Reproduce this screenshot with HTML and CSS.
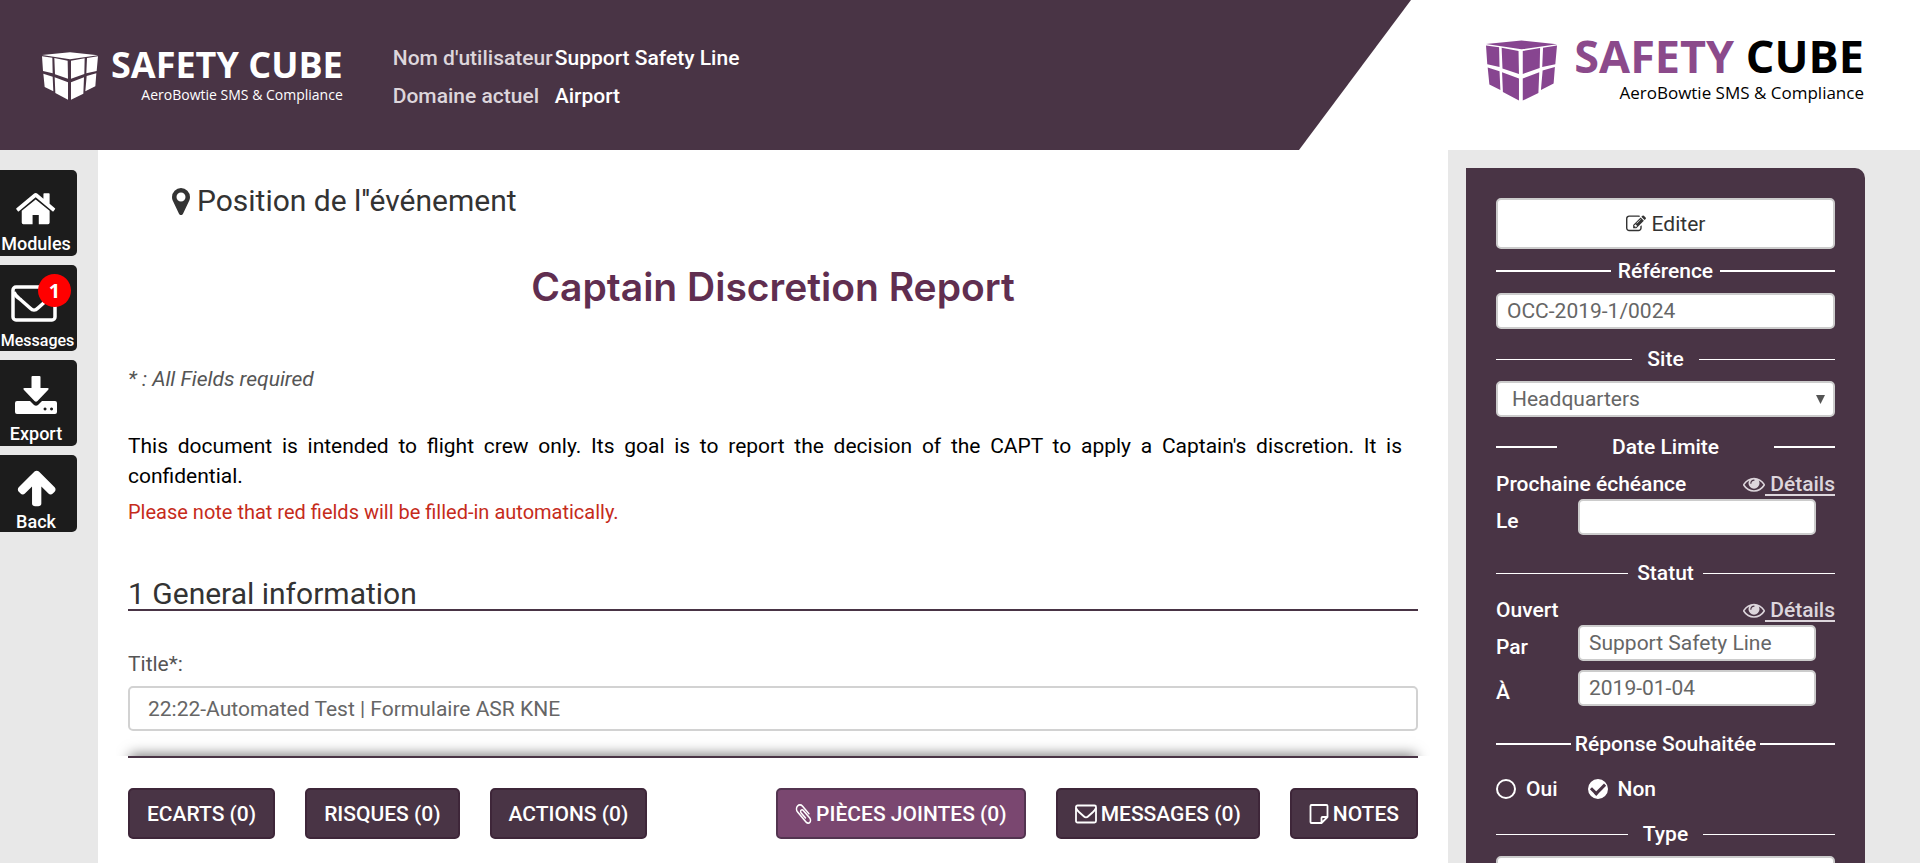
FILE: index.html
```html
<!DOCTYPE html>
<html lang="fr">
<head>
<meta charset="utf-8">
<meta name="viewport" content="width=device-width, initial-scale=1">
<title>Safety Cube</title>
<link rel="stylesheet" href="styles.css">
</head>
<body>
<svg class="defs" aria-hidden="true">
  <symbol id="cube" viewBox="126 155 168 144">
    <path d="M126 164L210 156L294 165L210 177ZM126 168L157 172L158 219L129 212ZM163 173L203 181L204 235L165 222ZM213 181L254 174L253 221L213 235ZM261 173L294 168L290 212L259 219ZM130 220L158 229L160 273L134 260ZM164 231L204 246L204 298L166 278ZM213 246L252 231L250 280L213 298ZM260 227L289 219L286 258L256 273Z"/>
  </symbol>
  <symbol id="eye" viewBox="0 0 1792 1792">
    <path d="M1664 960q-152-236-381-353 61 104 61 225 0 185-131.500 316.500t-316.500 131.500-316.500-131.500-131.500-316.500q0-121 61-225-229 117-381 353 133 205 333.500 326.500t434.500 121.500 434.500-121.500 333.500-326.500zm-720-384q0-20-14-34t-34-14q-125 0-214.500 89.500t-89.500 214.500q0 20 14 34t34 14 34-14 14-34q0-86 61-147t147-61q20 0 34-14t14-34zm848 384q0 34-20 69-140 230-376.500 368.500t-499.500 138.500-499.500-139-376.500-368q-20-35-20-69t20-69q140-229 376.500-368t499.500-139 499.500 139 376.500 368q20 35 20 69z"/>
  </symbol>
</svg>

<header class="header">
  <div class="header-bar">
    <div class="logo logo-light">
      <svg class="logo-cube"><use href="#cube"/></svg>
      <div class="logo-text">
        <span class="logo-name">SAFETY CUBE</span>
        <span class="logo-tag">AeroBowtie SMS &amp; Compliance</span>
      </div>
    </div>
    <dl class="user-info">
      <dt>Nom d'utilisateur</dt><dd>Support Safety Line</dd>
      <dt>Domaine actuel</dt><dd>Airport</dd>
    </dl>
  </div>
  <div class="logo logo-color">
    <svg class="logo-cube"><use href="#cube"/></svg>
    <div class="logo-text">
      <span class="logo-name"><span class="logo-accent">SAFETY</span> CUBE</span>
      <span class="logo-tag">AeroBowtie SMS &amp; Compliance</span>
    </div>
  </div>
</header>

<div class="layout">
  <nav class="rail">
    <a class="rail-item" href="#modules">
      <svg class="rail-icon" viewBox="0 0 42 42"><path transform="translate(-1 2) scale(.0242)" d="M1472 992v480q0 26-19 45t-45 19h-384v-384h-256v384h-384q-26 0-45-19t-19-45v-480q0-1 .5-3t.5-3l575-474 575 474q1 2 1 6zm223-69l-62 74q-8 9-21 11h-3q-13 0-21-7l-692-577-692 577q-12 8-24 7-13-2-21-11l-62-74q-8-10-7-23.500t11-21.500l719-599q32-26 76-26t76 26l244 204v-195q0-14 9-23t23-9h192q14 0 23 9t9 23v408l219 182q10 8 11 21.500t-7 23.500z"/></svg>
      <span>Modules</span>
    </a>
    <a class="rail-item rail-messages" href="#messages">
      <svg class="rail-icon rail-icon-wide" viewBox="0 0 46 42"><g fill="none" stroke="#fff" stroke-width="3.500"><rect x="2" y="5" width="42" height="33" rx="3"/><path d="M3 10c1 4 3 5 7 8l9 8c3 3 5 3 8 0l9-8c4-3 6-4 7-8"/></g></svg>
      <span>Messages</span>
      <span class="badge">1</span>
    </a>
    <a class="rail-item" href="#export">
      <svg class="rail-icon" viewBox="0 0 42 42"><path fill-rule="evenodd" d="M16.500 2q0-1 1-1h7q1 0 1 1v11h7q2 0 .5 2L22.500 26q-1.500 1.500-3 0L9 15q-1.500-2 .5-2h7ZM2 26h13l4 4q2 1.500 4 0l4-4h13q2 0 2 2v9q0 2-2 2H2q-2 0-2-2v-9q0-2 2-2ZM30 32.500a1.500 1.500 0 1 0 .1 0ZM36.500 32.500a1.500 1.500 0 1 0 .1 0Z"/></svg>
      <span>Export</span>
    </a>
    <a class="rail-item rail-back" href="#back">
      <svg class="rail-icon" viewBox="0 0 42 42"><path transform="translate(0 -1) scale(.0242)" d="M1675 971q0 51-37 90l-75 75q-38 38-91 38-54 0-90-38l-294-293v704q0 52-37.500 84.500t-90.500 32.500h-128q-53 0-90.500-32.500t-37.500-84.500v-704l-294 293q-36 38-90 38t-90-38l-75-75q-38-38-38-90 0-53 38-91l651-651q35-37 90-37 54 0 91 37l651 651q37 39 37 91z"/></svg>
      <span>Back</span>
    </a>
  </nav>

  <main class="main">
    <div class="report">
      <h3 class="position"><svg class="pin" viewBox="384 128 1024 1536"><path d="M1152 640q0-106-75-181t-181-75-181 75-75 181 75 181 181 75 181-75 75-181zm256 0q0 109-33 179l-364 774q-16 33-47.500 52t-67.500 19-67.500-19-46.500-52l-365-774q-33-70-33-179 0-212 150-362t362-150 362 150 150 362z"/></svg>Position de l''événement</h3>
      <h1 class="title">Captain Discretion Report</h1>
      <p class="required">* : All Fields required</p>
      <p class="intro">This document is intended to flight crew only. Its goal is to report the decision of the CAPT to apply a Captain's discretion. It is confidential.</p>
      <p class="warning">Please note that red fields will be filled-in automatically.</p>
      <h2 class="section">1 General information</h2>
      <label class="field-label" for="title">Title*:</label>
      <input class="field" id="title" type="text" value="22:22-Automated Test | Formulaire ASR KNE">
    </div>
    <footer class="actions">
      <button class="btn" type="button">ECARTS (0)</button>
      <button class="btn" type="button">RISQUES (0)</button>
      <button class="btn" type="button">ACTIONS (0)</button>
      <button class="btn btn-active" type="button"><svg class="btn-icon btn-icon-narrow" viewBox="128 128 1536 1536" preserveAspectRatio="none"><path d="M1596 1385q0 117-79 196t-196 79q-135 0-235-100l-777-776q-113-115-113-271 0-159 110-270t269-111q158 0 273 113l605 606q10 10 10 22 0 16-30.500 46.500t-46.500 30.500q-13 0-23-10l-606-607q-79-77-181-77-106 0-179 75t-73 181q0 105 76 181l776 777q63 63 145 63 64 0 106-42t42-106q0-82-63-145l-581-581q-26-24-60-24-29 0-48 19t-19 48q0 32 25 59l410 410q10 10 10 22 0 16-31 47t-47 31q-12 0-22-10l-410-410q-63-61-63-149 0-82 57-139t139-57q88 0 149 63l581 581q100 98 100 235z"/></svg>PIÈCES JOINTES (0)</button>
      <button class="btn" type="button"><svg class="btn-icon btn-icon-wide" viewBox="0 0 22 20"><g fill="none" stroke="#fff" stroke-width="1.800"><rect x="1" y="1.500" width="20" height="17" rx="1.500"/><path d="M1 4c1 2 2 3 3 4l5 4.500c1 1 3 1 4 0l5-4.500c1-1 2-2 3-4"/></g></svg>MESSAGES (0)</button>
      <button class="btn" type="button"><svg class="btn-icon btn-icon-note" viewBox="0 0 20 20"><path fill="none" stroke="#fff" stroke-width="1.800" stroke-linejoin="round" d="M12.500 19H2.500q-1 0-1-1V2q0-1 1-1h15q1 0 1 1v11ZM12.500 19V14q0-1 1-1h5"/></svg>NOTES</button>
    </footer>
  </main>

  <aside class="side">
    <form class="panel">
      <button class="edit" type="button"><svg class="btn-icon" viewBox="0 0 1792 1792"><path d="M888 1184l116-116-152-152-116 116v56h96v96h56zm440-720q-16-16-33 1l-350 350q-17 17-1 33t33-1l350-350q17-17 1-33zm80 594v190q0 119-84.500 203.500t-203.500 84.500h-832q-119 0-203.500-84.500t-84.500-203.500v-832q0-119 84.500-203.500t203.500-84.500h832q63 0 117 25 15 7 18 23 3 17-9 29l-49 49q-14 14-32 8-23-6-45-6h-832q-66 0-113 47t-47 113v832q0 66 47 113t113 47h832q66 0 113-47t47-113v-126q0-13 9-22l64-64q15-15 35-7t20 29zm-96-738l288 288-672 672h-288v-288zm444 132l-92 92-288-288 92-92q28-28 68-28t68 28l152 152q28 28 28 68t-28 68z"/></svg>Editer</button>

      <label class="rule rule-34 rule-thick" for="ref">Référence</label>
      <input class="panel-field" id="ref" type="text" value="OCC-2019-1/0024">

      <label class="rule rule-40 rule-gap" for="site">Site</label>
      <div class="select"><select class="panel-field" id="site"><option>Headquarters</option></select></div>

      <div class="rule rule-18 rule-thick rule-gap">Date Limite</div>
      <div class="row"><span>Prochaine échéance</span><a class="details" href="#echeance"><svg class="eye"><use href="#eye"/></svg><span>&nbsp;Détails</span></a></div>
      <div class="pair"><label for="le">Le</label><input class="panel-field" id="le" type="text"></div>

      <div class="rule rule-39 rule-far">Statut</div>
      <div class="row"><span>Ouvert</span><a class="details" href="#statut"><svg class="eye"><use href="#eye"/></svg><span>&nbsp;Détails</span></a></div>
      <div class="pair"><label for="par">Par</label><input class="panel-field" id="par" type="text" value="Support Safety Line"></div>
      <div class="pair pair-next"><label for="date">À</label><input class="panel-field" id="date" type="text" value="2019-01-04"></div>

      <div class="rule rule-22 rule-thick rule-far">Réponse Souhaitée</div>
      <div class="radios">
        <label><input type="radio" name="reponse">Oui</label>
        <label><input type="radio" name="reponse" checked>Non</label>
      </div>

      <label class="rule rule-39" for="type">Type</label>
      <div class="select"><select class="panel-field" id="type"><option></option></select></div>
    </form>
  </aside>
</div>
</body>
</html>
```
FILE: styles.css
```css
* { box-sizing: border-box; }

body {
  margin: 0;
  height: 100vh;
  display: flex;
  flex-direction: column;
  overflow: hidden;
  background: #fff;
  color: #333;
  font: 400 21px/30px Roboto, "Liberation Sans", sans-serif;
}

h1, h2, h3, p, dl, dd { margin: 0; }
input, select, button { font: inherit; color: inherit; }
svg { fill: currentColor; }
.defs { position: absolute; width: 0; height: 0; }

/* Header */
.header {
  flex: none;
  display: flex;
  justify-content: space-between;
  height: 150px;
}
.header-bar {
  flex: 0 0 1411px;
  display: flex;
  align-items: flex-start;
  gap: 50px;
  padding: 42px 0 0 42px;
  background: #493445;
  clip-path: polygon(0 0, 100% 0, calc(100% - 112px) 100%, 0 100%);
}
.logo { display: flex; font-family: "Open Sans", "Noto Sans", sans-serif; }
.logo-text { display: flex; flex-direction: column; align-items: flex-end; white-space: nowrap; }
.logo-name { font-weight: 700; }
.logo-light { gap: 13px; color: #fff; }
.logo-light .logo-cube { width: 56px; height: 48px; margin-top: 10px; }
.logo-light .logo-name { font-size: 36px; line-height: 46px; }
.logo-light .logo-tag { font-size: 14px; line-height: 14px; }
.logo-color { gap: 17px; padding: 28px 56px 0 0; color: #000; }
.logo-color .logo-cube { width: 71px; height: 61px; margin-top: 12px; color: #874590; }
.logo-color .logo-name { font-size: 45px; line-height: 56px; }
.logo-color .logo-tag { font-size: 17px; line-height: 18px; }
.logo-accent { color: #8b4a8b; }

.user-info {
  display: grid;
  grid-template-columns: 162px auto;
  grid-auto-rows: 38px;
  line-height: 32px;
  font-weight: 500;
  white-space: nowrap;
  color: #fff;
}
.user-info dt { color: #ddd6dc; }

/* Page columns */
.layout {
  flex: 1;
  min-height: 0;
  display: flex;
  background: #e8e8e8;
}

.rail {
  flex: 0 0 98px;
  display: flex;
  flex-direction: column;
  align-items: flex-start;
  gap: 9px;
  padding-top: 20px;
}
.rail-item {
  position: relative;
  display: flex;
  flex-direction: column;
  align-items: center;
  width: 77px;
  height: 86px;
  padding: 15px 5px 0 0;
  border-radius: 0 5px 5px 0;
  background: #1c1c1c;
  color: #fff;
  font-size: 18px;
  font-weight: 500;
  line-height: 34px;
  text-decoration: none;
}
.rail-icon { flex: none; width: 42px; height: 42px; }
.rail-icon-wide { width: 46px; margin-right: 8px; }
.rail-messages { font-size: 16px; padding: 17px 2px 0 0; }
.rail-back { height: 77px; padding-top: 12px; line-height: 26px; }
.badge {
  position: absolute;
  top: 9px;
  right: 6px;
  width: 33px;
  height: 33px;
  border-radius: 50%;
  background: #f00;
  font: 700 20px/33px "Open Sans", sans-serif;
  text-align: center;
}

.main {
  flex: 1;
  min-width: 0;
  display: flex;
  flex-direction: column;
  padding: 0 30px;
  background: #fff;
}
.report {
  flex: 1;
  min-height: 0;
  overflow: hidden;
}
.position {
  display: flex;
  align-items: center;
  gap: 7px;
  margin: 30px 0 0 44px;
  font-size: 30px;
  font-weight: 400;
  line-height: 42px;
}
.pin { width: 18px; height: 27px; }
.title {
  margin-top: 40px;
  font: 600 39px/50px Inter, Roboto, sans-serif;
  text-align: center;
  color: #602e50;
}
.required { margin-top: 52px; font-style: italic; color: #555; }
.intro { margin: 37px 16px 0 0; color: #000; text-align: justify; }
.warning { margin-top: 6px; font-size: 20px; color: #c62b1b; }
.section {
  margin-top: 43px;
  padding-top: 9px;
  border-bottom: 2px solid #493445;
  font-size: 30px;
  font-weight: 400;
  line-height: 30px;
}
.field-label { display: block; margin-top: 38px; color: #555; }
.field {
  width: 100%;
  height: 45px;
  margin-top: 7px;
  padding: 0 18px;
  border: 2px solid #d2d2d2;
  border-radius: 5px;
  background: #fff;
  color: #666;
}

.actions {
  flex: none;
  display: flex;
  gap: 30px;
  padding: 30px 0 24px;
  border-top: 2px solid #493445;
  background: #fff;
  box-shadow: 0 -4px 12px -2px rgba(0, 0, 0, .5);
  clip-path: polygon(-12px -20px, calc(100% + 12px) -20px, calc(100% + 12px) 0, 100% 0, 100% 100%, 0 100%, 0 0, -12px 0);
}
.btn {
  display: flex;
  align-items: center;
  justify-content: center;
  gap: 4px;
  height: 51px;
  padding: 0 17px;
  border: 2px solid #3e2639;
  border-radius: 5px;
  background: #493445;
  color: #fff;
  font-weight: 500;
  white-space: nowrap;
}
.btn-active { margin-left: auto; border-color: #533450; background: #7a4770; }
.btn-icon { flex: none; width: 20px; height: 20px; }
.btn-icon-narrow { width: 17px; }
.btn-icon-wide { width: 22px; }
.btn-icon-note { width: 20px; }

/* Right panel */
.side {
  flex: 0 0 472px;
  padding: 18px 55px 0 18px;
  overflow: hidden;
}
.panel {
  padding: 30px;
  border-radius: 0 10px 0 0;
  background: #493445;
  color: #fff;
  font-weight: 500;
}
.edit {
  display: flex;
  align-items: center;
  justify-content: center;
  gap: 6px;
  width: 100%;
  height: 51px;
  border: 2px solid #ccc;
  border-radius: 5px;
  background: #fff;
  color: #333;
  font-weight: 400;
}
.panel-field {
  display: block;
  width: 100%;
  height: 36px;
  padding: 0 9px;
  border: 2px solid #ccc;
  border-radius: 5px;
  background: #fff;
  color: #666;
  font-weight: 400;
}
.select { position: relative; }
.select select { appearance: none; padding-left: 14px; }
.select::after {
  content: "";
  position: absolute;
  top: 14px;
  right: 10px;
  width: 9px;
  height: 9px;
  background: #555;
  clip-path: polygon(0 0, 100% 0, 50% 100%);
}

.rule {
  display: flex;
  align-items: center;
  justify-content: space-between;
  height: 44px;
  line-height: 44px;
  white-space: nowrap;
}
.rule::before, .rule::after { content: ""; height: 1px; background: #fff; }
.rule-thick::before, .rule-thick::after { height: 2px; }
.rule-18::before, .rule-18::after { width: 18%; }
.rule-22::before, .rule-22::after { width: 22%; }
.rule-34::before, .rule-34::after { width: 34%; }
.rule-39::before, .rule-39::after { width: 39%; }
.rule-40::before, .rule-40::after { width: 40%; }
.rule-gap { margin-top: 8px; }
.rule-far { margin-top: 16px; }

.row {
  display: flex;
  justify-content: space-between;
  line-height: 30px;
}
.details {
  display: flex;
  align-items: center;
  color: #ddd6dc;
  text-decoration: none;
}
.details span { text-decoration: underline; text-decoration-thickness: 2px; text-underline-offset: 3px; }
.eye { width: 22px; height: 22px; }
.pair {
  display: grid;
  grid-template-columns: 82px 1fr;
  padding-right: 19px;
  line-height: 44px;
  height: 36px;
}
.pair-next { margin-top: 9px; }

.radios {
  display: flex;
  gap: 30px;
  height: 46px;
  line-height: 46px;
}
.radios label { display: flex; align-items: center; gap: 10px; }
.radios input {
  appearance: none;
  display: grid;
  place-items: center;
  width: 20px;
  height: 20px;
  margin: 0;
  border: 2px solid #fff;
  border-radius: 50%;
}
.radios input:checked { background: #fff; }
.radios input:checked::before {
  content: "";
  width: 11px;
  height: 6px;
  margin-bottom: 3px;
  border: solid #493445;
  border-width: 0 0 3px 3px;
  rotate: -45deg;
}
```
